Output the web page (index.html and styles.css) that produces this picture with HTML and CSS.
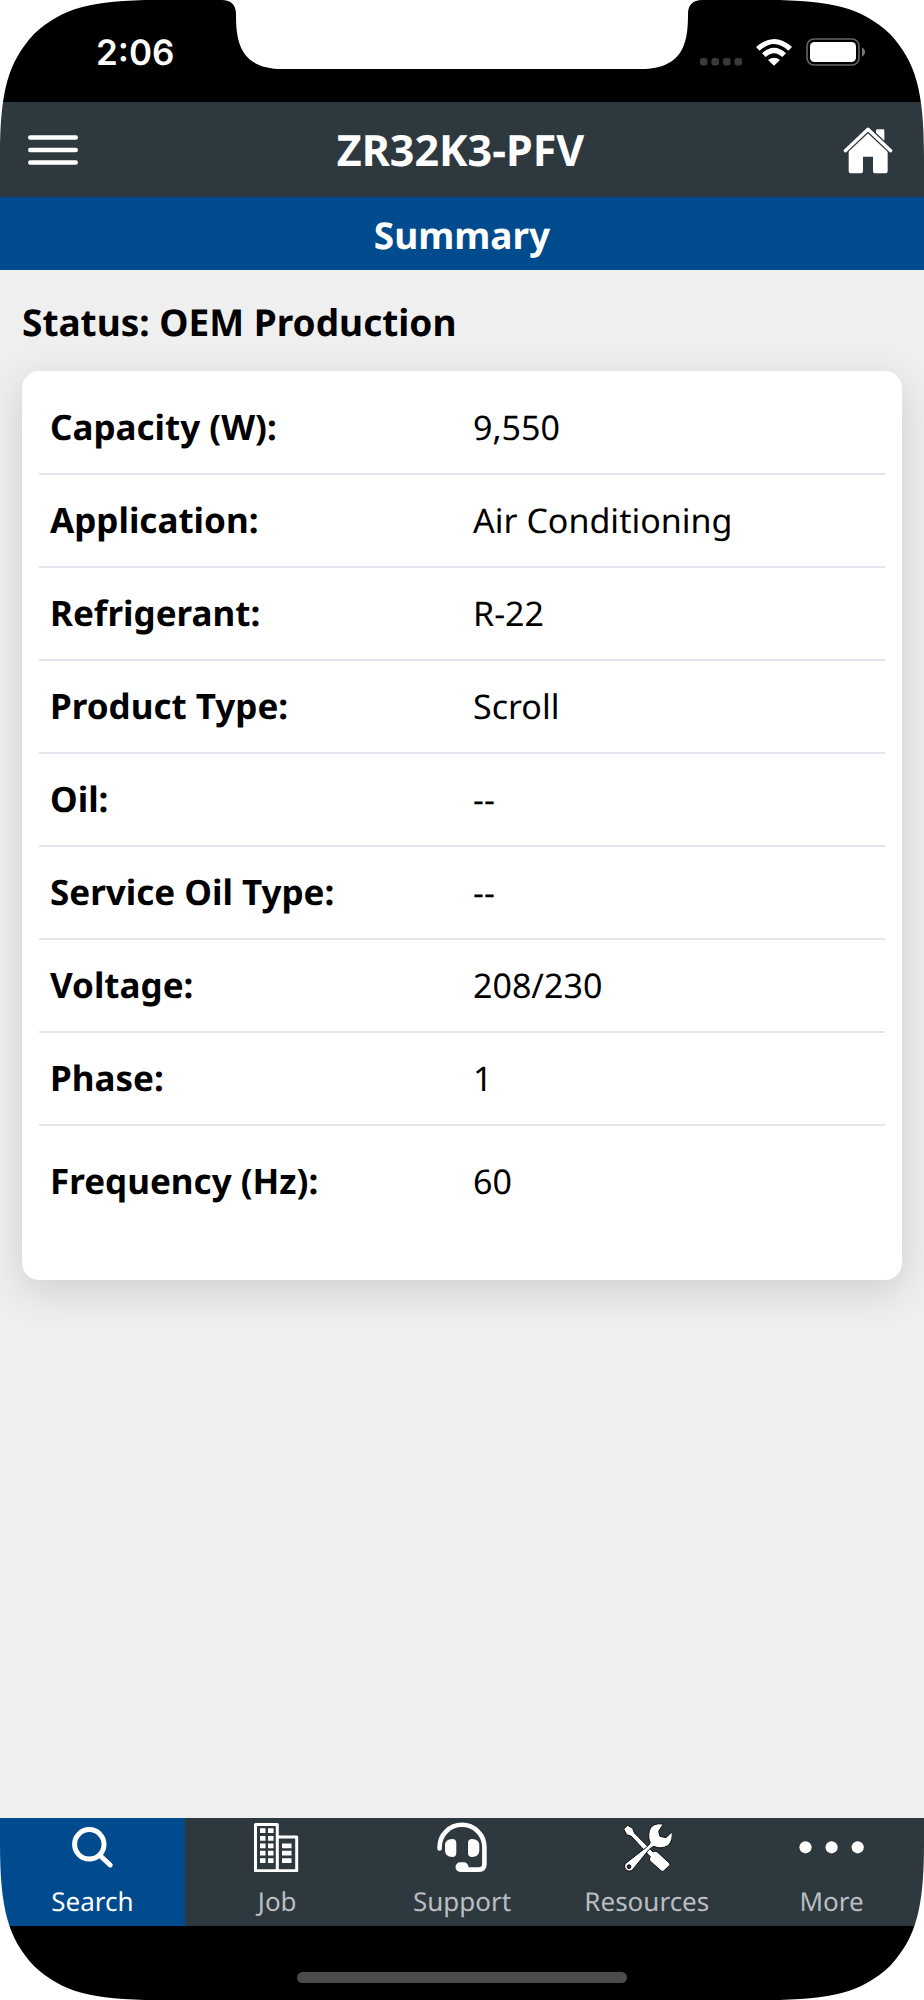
FILE: index.html
```html
<!DOCTYPE html>
<html lang="en">
<head>
<meta charset="utf-8">
<meta name="viewport" content="width=device-width, initial-scale=1">
<title>ZR32K3-PFV</title>
<link rel="stylesheet" href="styles.css">
</head>
<body>
<div class="phone">
  <div class="status-bar">
    <time class="clock">2:06</time>
    <div class="indicators">
      <svg class="signal" width="42" height="8" viewBox="0 0 42 8" aria-hidden="true"><g fill="#3a3a3a"><rect width="7.5" height="7.5" rx="2.5"/><rect x="11.5" width="7.5" height="7.5" rx="2.5"/><rect x="23" width="7.5" height="7.5" rx="2.5"/><rect x="34.5" width="7.5" height="7.5" rx="2.5"/></g></svg>
      <svg class="wifi" width="36" height="27" viewBox="0 0 108 81" aria-hidden="true"><g fill="#fff"><path d="M0 24Q54-24 108 24L97 35Q54-5 11 35Z"/><path d="M18 43Q54 10 90 43L79 54Q54 31 29 54Z"/><path d="M36 63Q54 49 72 63L54 80Z"/></g></svg>
      <svg class="battery" width="60" height="28" viewBox="0 0 60 28" aria-hidden="true"><rect x="1" y="1" width="52" height="26" rx="7" fill="none" stroke="#666" stroke-width="1.6"/><rect x="4" y="4" width="46" height="20" rx="4.5" fill="#fff"/><path d="M56 9.5q3 1.5 3 4.5t-3 4.5z" fill="#777"/></svg>
    </div>
  </div>
  <header class="app-header">
    <button class="icon-button" type="button" aria-label="Menu">
      <svg width="50" height="32" viewBox="0 0 50 32"><path d="M2.300 3.500h45.400M2.300 16h45.400M2.300 28.500h45.400" stroke="#fff" stroke-width="4.600" stroke-linecap="round"/></svg>
    </button>
    <h1 class="title">ZR32K3-PFV</h1>
    <a class="icon-button" href="#home" aria-label="Home">
      <svg width="50" height="47" viewBox="1142 377 150 141"><path d="M1241 412V388q0-4 4-4h17q4 0 4 4v46z" fill="#fff"/><path d="M1217 391l59 57v60q0 8-8 8h-28q-8 0-8-8v-42h-30v42q0 8-8 8h-27q-8 0-8-8v-60z" fill="#fff"/><path d="M1149 448l68-64 68 64" fill="none" stroke="#2e383f" stroke-width="18"/><path d="M1149 448l68-64 68 64" fill="none" stroke="#fff" stroke-width="10" stroke-linecap="round" stroke-linejoin="round"/></svg>
    </a>
  </header>
  <h2 class="section-bar">Summary</h2>
  <main class="content">
    <h3 class="product-status">Status: OEM Production</h3>
    <div class="card">
      <table class="specs">
        <tbody>
          <tr><th scope="row">Capacity (W):</th><td>9,550</td></tr>
          <tr><th scope="row">Application:</th><td>Air Conditioning</td></tr>
          <tr><th scope="row">Refrigerant:</th><td>R-22</td></tr>
          <tr><th scope="row">Product Type:</th><td>Scroll</td></tr>
          <tr><th scope="row">Oil:</th><td>--</td></tr>
          <tr><th scope="row">Service Oil Type:</th><td>--</td></tr>
          <tr><th scope="row">Voltage:</th><td>208/230</td></tr>
          <tr><th scope="row">Phase:</th><td>1</td></tr>
          <tr class="last"><th scope="row">Frequency (Hz):</th><td>60</td></tr>
        </tbody>
      </table>
    </div>
  </main>
  <nav class="tabs" aria-label="Main">
    <a class="tab active" href="#search" aria-current="page">
      <svg width="50" height="50" viewBox="0 0 50 50" fill="none" stroke="#fff" stroke-width="5" stroke-linecap="round"><circle cx="22.300" cy="22.300" r="14.700"/><path d="M33.500 34l9.700 9"/></svg>
      Search
    </a>
    <a class="tab" href="#job">
      <svg width="50" height="50" viewBox="0 0 50 50" fill="#fff"><path d="M3.500 2.500h21.800v46.200H3.500zM25.300 15H44.700v33.700H25.300z" fill="none" stroke="#fff" stroke-width="3" stroke-linejoin="round"/><path d="M8 6.300h5.500v4.700H8zM16 6.300h5.500v4.700H16zM8 14h5.500v4.700H8zM16 14h5.500v4.700H16zM8 21.500h5.500v4.700H8zM16 21.500h5.500v4.700H16zM8 28.700h5.500v4.700H8zM16 28.700h5.500v4.700H16zM8 36.300h5.500V41H8zM16 36.300h5.500V41H16zM30 21.500h9.500v4.700H30zM30 28.700h9.500v4.700H30zM30 36.300h9.500V41H30z"/></svg>
      Job
    </a>
    <a class="tab" href="#support">
      <svg width="50" height="50" viewBox="0 0 50 50" fill="#fff"><path d="M2.600 26.500V25a22.400 22.200 0 0 1 44.800 0V42q0 5.600-5.600 5.600H26" fill="none" stroke="#fff" stroke-width="4.600" stroke-linecap="round"/><path d="M19.300 21v10q0 4-4 4Q8 35 8 28.500v-5Q8 17 15.300 17q4 0 4 4zM31 21v10q0 4 4 4 7.300 0 7.300-6.500v-5Q42.300 17 35 17q-4 0-4 4z"/><rect x="18.500" y="40.300" width="13" height="9.600" rx="4.800"/></svg>
      Support
    </a>
    <a class="tab" href="#resources">
      <svg width="50" height="50" viewBox="65 36 150 150" fill="#fff" stroke="#0b0d0e" stroke-width="3" stroke-linejoin="round"><path d="M70 57L82 46 97 55 103 70 150 117 158 126Q164 121 170 125L207 159Q211 163 207 167L190 183Q186 186 182 182L149 153Q145 147 150 140L144 134 93 79 79 74Z"/><path d="M189 42Q154 37 147 62 142 84 150 98 146 106 138 112L77 159A13 13 0 1 0 97 179L145 120Q152 112 161 109 181 119 203 107 219 92 215 65L197 83 179 79 175 64Z"/><circle cx="86" cy="170" r="5.500" fill="#2e383f"/></svg>
      Resources
    </a>
    <a class="tab" href="#more">
      <svg width="66" height="50" viewBox="0 0 66 50" fill="#fff"><circle cx="6.500" cy="25.300" r="6.100"/><circle cx="32.600" cy="25.300" r="6.100"/><circle cx="58.700" cy="25.300" r="6.100"/></svg>
      More
    </a>
  </nav>
  <div class="home-area"><span class="home-indicator"></span></div>
  <svg class="notch" width="480" height="70" viewBox="0 0 480 70" aria-hidden="true"><path d="M0 0C9 0 14 5 14 14C14 40 17 69 61 69H419C463 69 466 40 466 14C466 5 471 0 480 0Z"/></svg>
  <svg class="corner top-left" viewBox="0 0 156 156" aria-hidden="true"><path d="M0 0H156C92 0 62 8 34 34C8 62 0 92 0 156Z"/></svg>
  <svg class="corner top-right" viewBox="0 0 156 156" aria-hidden="true"><path d="M0 0H156C92 0 62 8 34 34C8 62 0 92 0 156Z"/></svg>
  <svg class="corner bottom-left" viewBox="0 0 156 156" aria-hidden="true"><path d="M0 0H156C92 0 62 8 34 34C8 62 0 92 0 156Z"/></svg>
  <svg class="corner bottom-right" viewBox="0 0 156 156" aria-hidden="true"><path d="M0 0H156C92 0 62 8 34 34C8 62 0 92 0 156Z"/></svg>
</div>
</body>
</html>
```

FILE: styles.css
```css
* {
  box-sizing: border-box;
}

body {
  margin: 0;
  background: #fff;
  color: #000;
  font-family: "Noto Sans", sans-serif;
  text-rendering: geometricPrecision;
}

svg {
  display: block;
}

.phone {
  position: relative;
  display: flex;
  flex-direction: column;
  min-height: 100vh;
  overflow: hidden;
  background: #efefef;
}

.status-bar {
  display: flex;
  justify-content: space-between;
  align-items: flex-start;
  padding: 31px 58px 27px 96px;
  background: #000;
  color: #fff;
}

.clock {
  font: 600 35px/44px Inter, sans-serif;
}

.indicators {
  display: flex;
  align-items: flex-end;
  gap: 14px;
  padding-top: 7px;
}

.app-header {
  display: flex;
  justify-content: space-between;
  align-items: center;
  padding: 18px 31px 17px 28px;
  background: #2e383f;
  color: #fff;
}

.icon-button {
  padding: 0;
  border: 0;
  background: none;
}

.title {
  margin: 0;
  font-size: 43px;
  line-height: 60px;
}

.section-bar {
  margin: 0;
  padding: 13px 12px 11px;
  background: #004b8d;
  color: #fff;
  font-size: 37px;
  line-height: 49px;
  text-align: center;
}

.content {
  flex: 1;
  padding: 27px 22px;
}

.product-status {
  margin: 0 0 25px;
  font-size: 37px;
  line-height: 49px;
}

.card {
  padding: 11px 17px 53px;
  border-radius: 17px;
  background: #fff;
  box-shadow: 0 11px 40px rgba(0, 0, 0, 0.14);
}

.specs {
  width: 100%;
  table-layout: fixed;
  border-spacing: 0;
  font-size: 35px;
  line-height: 47px;
}

.specs th,
.specs td {
  padding: 22px 11px;
  border-bottom: 2px solid #e3e6ee;
  text-align: left;
}

.specs td {
  font-size: 34px;
}

.specs .last th,
.specs .last td {
  padding-top: 32px;
  border-bottom: 0;
}

.tabs {
  display: grid;
  grid-template-columns: repeat(5, 1fr);
  background: #2e383f;
}

.tab {
  display: flex;
  flex-direction: column;
  align-items: center;
  gap: 11px;
  padding: 4px 0 7px;
  color: #b9bdc0;
  font-size: 26px;
  line-height: 36px;
  text-decoration: none;
}

.tab.active {
  background: #004b8d;
  color: #fff;
}

.home-area {
  display: flex;
  justify-content: center;
  padding: 46px 0 17px;
  background: #000;
}

.home-indicator {
  width: 330px;
  height: 11px;
  border-radius: 6px;
  background: #4b4b4b;
}

.notch {
  position: absolute;
  top: 0;
  left: calc(50% - 240px);
  fill: #fff;
}

.corner {
  position: absolute;
  width: 156px;
  height: 156px;
  fill: #fff;
  pointer-events: none;
}

.top-left {
  top: 0;
  left: 0;
}

.top-right {
  top: 0;
  right: 0;
  transform: scaleX(-1);
}

.bottom-left {
  bottom: 0;
  left: 0;
  transform: scaleY(-1);
}

.bottom-right {
  right: 0;
  bottom: 0;
  transform: scale(-1);
}
```
